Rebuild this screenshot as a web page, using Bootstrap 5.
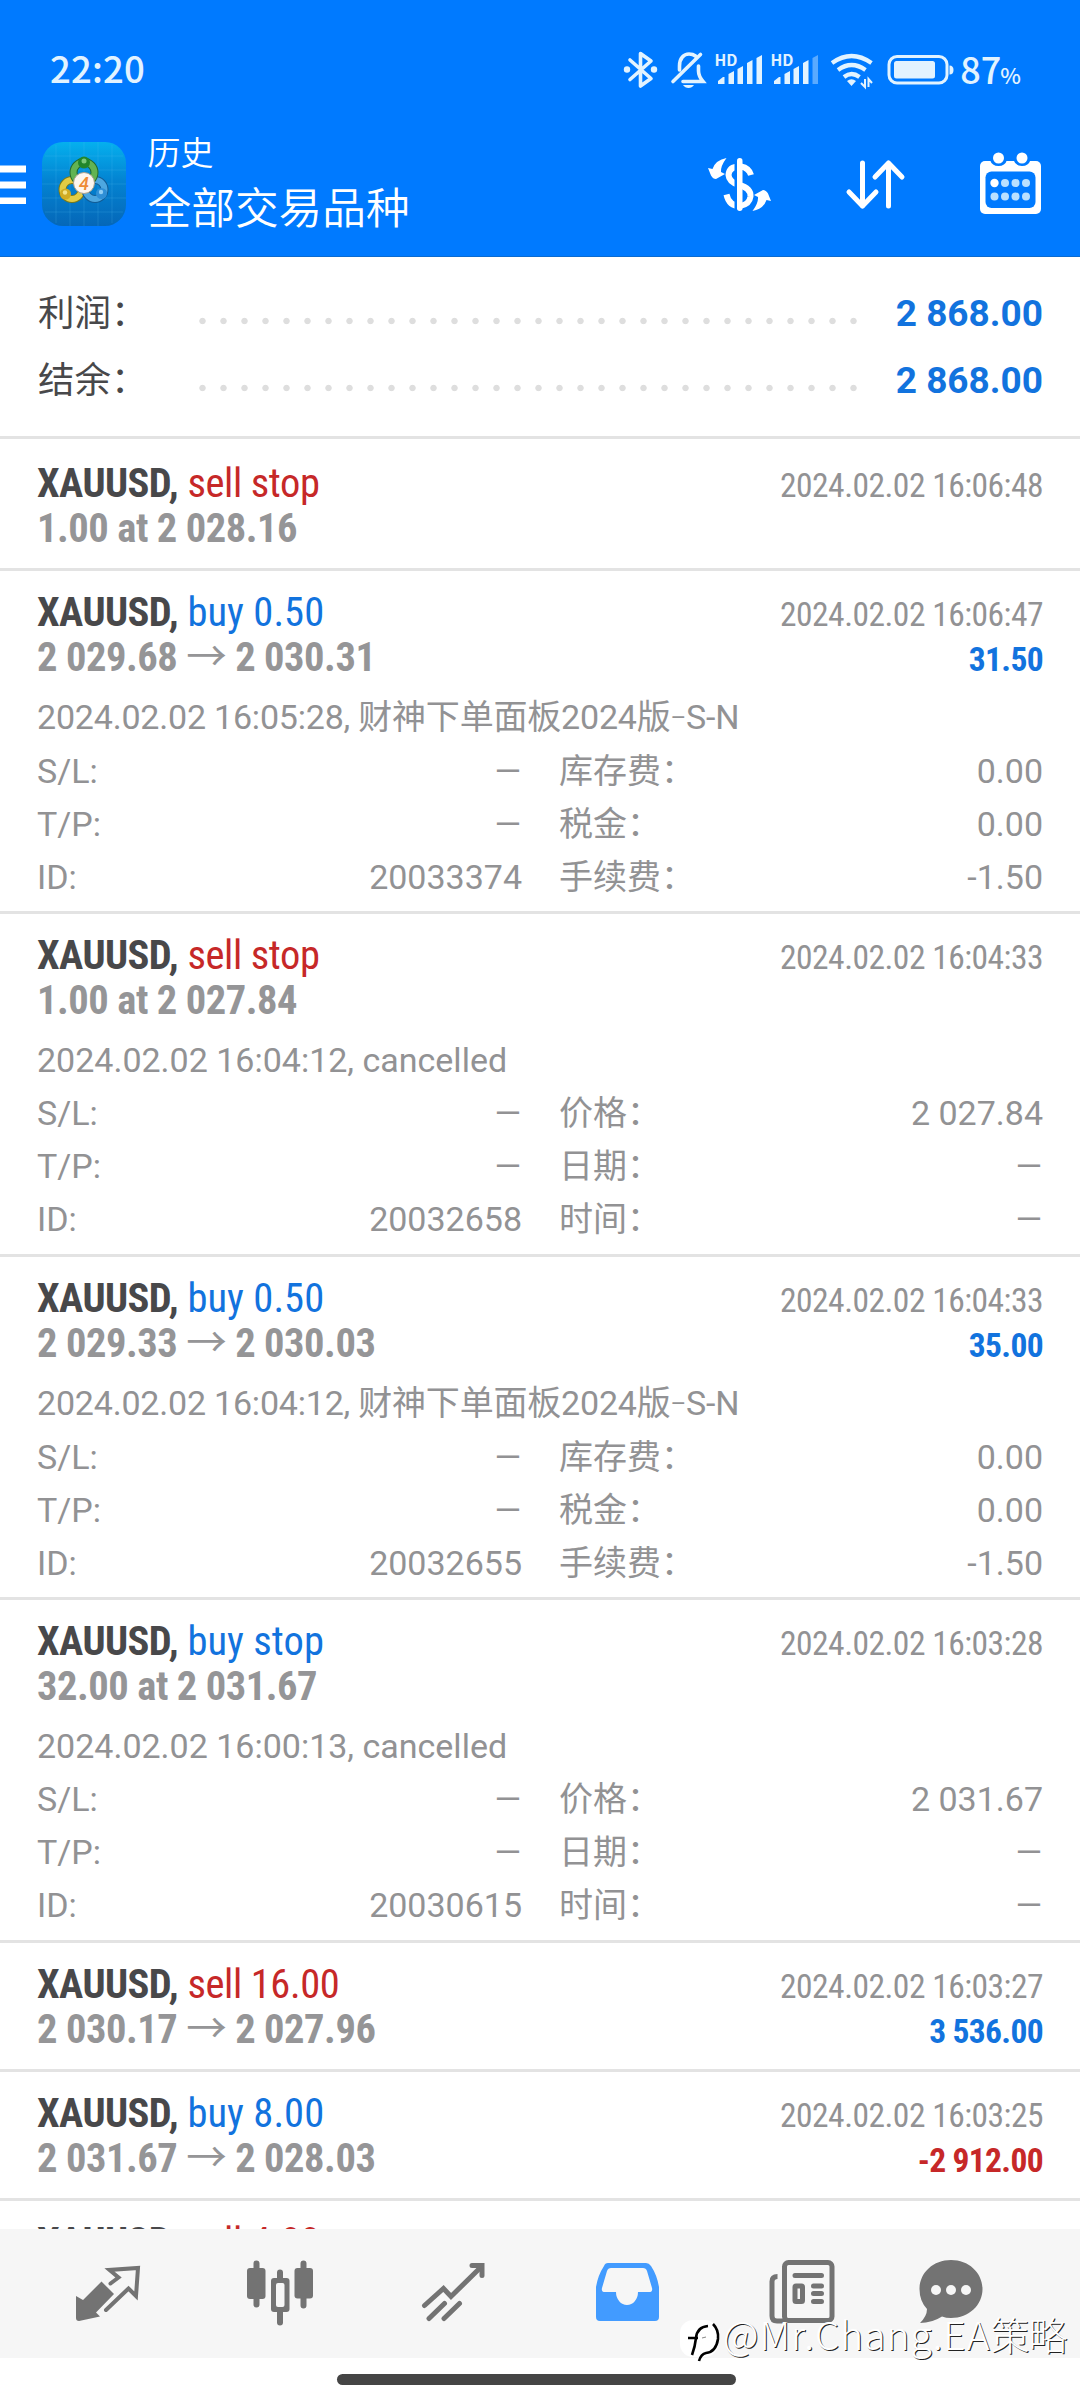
<!DOCTYPE html>
<html lang="zh-CN">
<head>
<meta charset="utf-8">
<meta name="viewport" content="width=device-width, initial-scale=1">
<title>历史</title>
<link href="https://cdn.jsdelivr.net/npm/bootstrap@5.3.0/dist/css/bootstrap.min.css" rel="stylesheet">
<style>
:root{--brand:#007aff;--ink:#48484a;--muted:#929294;--buy:#1273de;--sell:#c62828}
body{font-family:Roboto,"Noto Sans CJK SC",sans-serif;background:#fff;color:var(--ink);width:1080px}
svg{display:block;flex:none}
.app{height:2400px;overflow:hidden;position:relative}
.top{height:257px;background:var(--brand);border-bottom:1px solid #0b6bd0}
.status{height:40px;margin-top:50px;padding-left:50px;padding-right:60px;color:#e2f3ff;font-family:"Noto Sans CJK SC",sans-serif;font-weight:500;font-size:36px;line-height:40px}
.clock{font-size:36.5px;letter-spacing:.2px;margin-top:-4px}
.batt{margin-top:1px}
.pct{font-size:22px;margin-left:-1px;letter-spacing:-1px}
.tools{height:112px;margin-top:38px;padding-right:36px}
.heading{margin-left:21.5px;font-family:"Noto Sans CJK SC",sans-serif;font-weight:350}
.h-small{font-size:33px;line-height:47px}
.h-big{font-size:43.7px;line-height:60px}
.feed{height:1972px;overflow:hidden}
.sum{padding:23px 37px 22px 38px}
.sum-row{height:67px;line-height:67px;font-size:37px}
.sum-label{width:154px;font-size:36.5px}
.dots{width:672px;height:8px;margin-top:15px;background:radial-gradient(circle at center,#dedede 2.8px,transparent 3.6px) 0 0/21px 8px repeat-x}
.deal{border-top:3px solid #e3e3e3;padding:19px 37px 0 37px;height:129px;overflow:hidden}
.deal.first{padding-top:22px;height:132px}
.deal.open{height:343px}
.line{height:45px;line-height:45px;font-size:40.5px;font-family:"Roboto Condensed","Noto Sans CJK SC",sans-serif;white-space:nowrap}
.line b{font-weight:700;letter-spacing:-.55px}
.when{font-size:33.5px;color:var(--muted);line-height:50px;letter-spacing:-.5px}
.cash{font-size:33.5px;font-weight:700;line-height:50px;letter-spacing:-.65px}
.price{color:#959597;font-weight:700;letter-spacing:-.45px}
.buy{color:var(--buy)}.sell{color:var(--sell)}
.line .buy:not(.cash){letter-spacing:.05px}
.line .sell:not(.cash){letter-spacing:-.4px}
.info{margin-top:11px;font-size:34px;line-height:53px;color:var(--muted);font-weight:380}
.info .cell-a{width:485px}
.info .cell-b{width:484px;margin-left:37px}
.note-cn{letter-spacing:-.2px}
.short-dash{font-size:24px;vertical-align:3px}
.dash{margin-right:1px}
.tabs{height:129px;background:#f6f6f6;color:#737373;padding:28px 0 0 70px}
.tabs svg+svg{margin-left:var(--g)}
.pill{width:399px;height:11px;border-radius:6px;background:#454545;margin:16px auto 0 337px}
.mark-by{position:absolute;left:680px;top:2308px;height:56px;line-height:56px;font-family:"Noto Sans CJK SC",sans-serif;font-weight:300;font-size:39px;color:#fff;text-shadow:1px 1px 0 #222;white-space:nowrap}
.mark-by span{letter-spacing:.95px;margin:-7px 0 0 -2px}
.mark-by .han{letter-spacing:-1px;margin:0}
</style>
<script src="https://cdn.jsdelivr.net/npm/bootstrap@5.3.0/dist/js/bootstrap.bundle.min.js"></script>
</head>
<body>
<div class="app d-flex flex-column">
<header class="top d-flex flex-column flex-shrink-0">
  <div class="status d-flex align-items-center">
    <span class="clock">22:20</span>
    <div class="d-flex align-items-center ms-auto">
      <svg width="48" height="40" viewBox="620 50 48 40" fill="none" stroke="#e2f3ff" stroke-width="3.6" stroke-linejoin="round" stroke-linecap="round"><path d="M630 60 651 78.500 640.500 86V53.500L651 61 630 79.500"/><g fill="#e2f3ff" stroke="none"><circle cx="627" cy="69.500" r="3.200"/><circle cx="654" cy="69.500" r="3.200"/></g></svg>
      <svg width="44" height="40" viewBox="668 50 44 40" fill="none" stroke="#e2f3ff" stroke-width="3.6" stroke-linecap="round"><path d="M673 81.500 700.500 54.500M679.500 70V66C679.500 58 684 54 689 54q4 0 6.500 2M698.500 66v5q0 5 4.500 10.500H683"/><path d="M683 85h11q-2 3-5.500 3T683 85" fill="#e2f3ff" stroke="none"/></svg>
      <svg width="56" height="40" viewBox="712 50 56 40" fill="#e2f3ff"><text x="714.500" y="65.500" font-size="15.500" font-weight="700" textLength="23" lengthAdjust="spacingAndGlyphs">HD</text><path d="M718 84v-3l5-4h1.500v7zM728.500 84V74l5.500-3v13zM737.500 84V69l5.500-3v18zM747 84V63l5.500-3v24zM756.500 84V58l5.500-3v29z"/></svg>
      <svg width="60" height="40" viewBox="768 50 60 40" fill="#e2f3ff"><text x="770.500" y="65.500" font-size="15.500" font-weight="700" textLength="23" lengthAdjust="spacingAndGlyphs">HD</text><path d="M774 84v-3l5-4h1.500v7zM784.500 84V74l5.500-3v13zM793.500 84V69l5.500-3v18zM803 84V63l5.500-3v24z"/><path opacity=".4" d="M812.500 84V58l5.500-3v29z"/></svg>
      <svg width="56" height="40" viewBox="828 50 56 40" fill="none" stroke="#e2f3ff" stroke-width="4.200"><path d="M832 63q19.500-14 39.500 0M838 70q13.500-10 27.500 0M844 77q7.500-6 15.500 0"/><path d="M847 81q4.500-3.500 9 0l-4.500 5z" fill="#e2f3ff" stroke="none"/><path d="M865 79v8l-4-4M868.500 87v-8l3.500 4" stroke-width="2"/></svg>
      <svg width="76" height="40" viewBox="884 50 76 40"><rect x="889" y="56.500" width="58" height="26.500" rx="8" fill="none" stroke="#e2f3ff" stroke-width="3"/><rect x="894" y="61" width="41" height="17.500" rx="2.500" fill="#e2f3ff"/><path d="M949.500 65.500q4 0 4 4.500t-4 4.500z" fill="#e2f3ff"/></svg>
      <span class="batt d-flex align-items-baseline"><span>87</span><span class="pct">%</span></span>
    </div>
  </div>
  <div class="tools d-flex align-items-center text-white">
    <svg width="42" height="112" viewBox="0 128 42 112" fill="#fff"><path d="M0 165.500h26v7H0zM0 181.500h26v7H0zM0 197.500h26v6.500H0z"/></svg>
    <svg width="84" height="84" viewBox="0 0 84 84"><defs><linearGradient id="bg" x1="0" y1="0" x2="0" y2="1"><stop offset="0" stop-color="#05b0ee"/><stop offset=".45" stop-color="#0384d2"/><stop offset="1" stop-color="#0567b8"/></linearGradient></defs>
      <rect width="84" height="84" rx="21" fill="url(#bg)"/><path d="M14 3v78M28 0v84M42 0v84M56 0v84M70 3v78M3 14h78M0 28h84M0 42h84M0 56h84M3 70h78" stroke="#5cc4f2" stroke-opacity=".2" fill="none"/>
      <g fill="none" stroke-width="6"><circle cx="30" cy="47.500" r="9.500" stroke="#7b7a18" stroke-width="8"/><circle cx="30" cy="47.500" r="9.500" stroke="#e2cc45"/><circle cx="53" cy="47.500" r="9.500" stroke="#125b94" stroke-width="8"/><circle cx="53" cy="47.500" r="9.500" stroke="#4da7e0"/><circle cx="42" cy="30.500" r="10.500" stroke="#23692c" stroke-width="8"/><circle cx="42" cy="30.500" r="10.500" stroke="#62b352"/></g>
      <circle cx="42" cy="20.500" r="6" fill="#21862b"/><circle cx="23.500" cy="52" r="5.500" fill="#d1ac24"/><circle cx="59.500" cy="51.500" r="5.500" fill="#2f8fd6"/><circle cx="42" cy="19" r="2.500" fill="#7bc97a"/><circle cx="23" cy="50.500" r="2.200" fill="#f3e48a"/><circle cx="59" cy="50" r="2.200" fill="#8ecdf5"/>
      <circle cx="42" cy="41" r="10.500" fill="#fdf6ef" stroke="#a9a08c"/><text x="42" y="47.500" text-anchor="middle" font-size="18" font-style="italic" font-weight="500" fill="#ee8b35">4</text></svg>
    <div class="heading align-self-start"><div class="h-small">历史</div><div class="h-big">全部交易品种</div></div>
    <svg class="ms-auto" width="68" height="64" viewBox="706 151 68 64"><path d="M751 174q-2-7-10-8.500-12-.500-12.500 8.500.500 7 10.500 10 12 3 11.500 11.500-1 8-10.500 9.500-11 0-13.500-11.500" fill="none" stroke="#fff" stroke-width="6"/><path d="M736 155v56" stroke="#007aff" stroke-width="3"/><rect x="737" y="157" width="5.500" height="53" rx="2.700" fill="#fff"/><path d="M708 167l4.500 1q3-9 14-11-6 8-5.500 14l4 2-9 5q-3 0-5-3.500z" fill="#fff"/><path d="M708 167l4.500 1q3-9 14-11-6 8-5.500 14l4 2-9 5q-3 0-5-3.500z" fill="#fff" transform="rotate(180 739.500 183.500)"/></svg>
    <svg style="margin-left:71px" width="62" height="64" viewBox="845 151 62 64" fill="none" stroke="#fff" stroke-width="5" stroke-linecap="round" stroke-linejoin="round"><path d="M862.500 162v43M849 191l13.500 14 13.500-14M888.500 205v-43M875 176l13.500-14 13.500 14"/></svg>
    <svg style="margin-left:70px" width="67" height="64" viewBox="977 151 67 64"><rect x="980" y="160" width="61" height="53" rx="5" fill="#fff"/><rect x="985.500" y="170.500" width="50" height="36.500" rx="6" fill="#007aff"/><path d="M990 158v1q2 6 8.500 6t8.500-6v-1zM1013.500 158v1q2 6 8.500 6t8.500-6v-1z" fill="#007aff"/><g fill="#fff"><circle cx="998.500" cy="157" r="5.500"/><circle cx="1022" cy="157" r="5.500"/><circle cx="994.500" cy="182" r="4.200"/></g><g fill="#b9e0ff"><circle cx="1005" cy="182" r="4"/><circle cx="1015.500" cy="182" r="4"/><circle cx="1026" cy="182" r="4"/><circle cx="994.500" cy="195.500" r="4"/><circle cx="1005" cy="195.500" r="4"/><circle cx="1015.500" cy="195.500" r="4"/><circle cx="1026" cy="195.500" r="4"/></g></svg>
  </div>
</header>

<main class="feed flex-shrink-0">
  <section class="sum">
    <div class="sum-row d-flex align-items-center"><span class="sum-label">利润：</span><span class="dots"></span><b class="buy ms-auto">2 868.00</b></div>
    <div class="sum-row d-flex align-items-center"><span class="sum-label">结余：</span><span class="dots"></span><b class="buy ms-auto">2 868.00</b></div>
  </section>

  <article class="deal first">
    <div class="line d-flex justify-content-between"><span><b>XAUUSD,</b> <span class="sell">sell stop</span></span><span class="when">2024.02.02 16:06:48</span></div>
    <div class="line price">1.00 at 2 028.16</div>
  </article>

  <article class="deal open">
    <div class="line d-flex justify-content-between"><span><b>XAUUSD,</b> <span class="buy">buy 0.50</span></span><span class="when">2024.02.02 16:06:47</span></div>
    <div class="line d-flex justify-content-between"><span class="price">2 029.68 <span class="fw-normal">→</span> 2 030.31</span><span class="cash buy">31.50</span></div>
    <div class="info">
      <div class="note-cn">2024.02.02 16:05:28, 财神下单面板2024版<span class="short-dash">–</span>S-N</div>
      <div class="d-flex"><div class="cell-a d-flex justify-content-between"><span>S/L:</span><span class="dash">—</span></div><div class="cell-b d-flex justify-content-between"><span>库存费：</span><span>0.00</span></div></div>
      <div class="d-flex"><div class="cell-a d-flex justify-content-between"><span>T/P:</span><span class="dash">—</span></div><div class="cell-b d-flex justify-content-between"><span>税金：</span><span>0.00</span></div></div>
      <div class="d-flex"><div class="cell-a d-flex justify-content-between"><span>ID:</span><span>20033374</span></div><div class="cell-b d-flex justify-content-between"><span>手续费：</span><span>-1.50</span></div></div>
    </div>
  </article>

  <article class="deal open">
    <div class="line d-flex justify-content-between"><span><b>XAUUSD,</b> <span class="sell">sell stop</span></span><span class="when">2024.02.02 16:04:33</span></div>
    <div class="line price">1.00 at 2 027.84</div>
    <div class="info">
      <div>2024.02.02 16:04:12, cancelled</div>
      <div class="d-flex"><div class="cell-a d-flex justify-content-between"><span>S/L:</span><span class="dash">—</span></div><div class="cell-b d-flex justify-content-between"><span>价格：</span><span>2 027.84</span></div></div>
      <div class="d-flex"><div class="cell-a d-flex justify-content-between"><span>T/P:</span><span class="dash">—</span></div><div class="cell-b d-flex justify-content-between"><span>日期：</span><span class="dash">—</span></div></div>
      <div class="d-flex"><div class="cell-a d-flex justify-content-between"><span>ID:</span><span>20032658</span></div><div class="cell-b d-flex justify-content-between"><span>时间：</span><span class="dash">—</span></div></div>
    </div>
  </article>

  <article class="deal open">
    <div class="line d-flex justify-content-between"><span><b>XAUUSD,</b> <span class="buy">buy 0.50</span></span><span class="when">2024.02.02 16:04:33</span></div>
    <div class="line d-flex justify-content-between"><span class="price">2 029.33 <span class="fw-normal">→</span> 2 030.03</span><span class="cash buy">35.00</span></div>
    <div class="info">
      <div class="note-cn">2024.02.02 16:04:12, 财神下单面板2024版<span class="short-dash">–</span>S-N</div>
      <div class="d-flex"><div class="cell-a d-flex justify-content-between"><span>S/L:</span><span class="dash">—</span></div><div class="cell-b d-flex justify-content-between"><span>库存费：</span><span>0.00</span></div></div>
      <div class="d-flex"><div class="cell-a d-flex justify-content-between"><span>T/P:</span><span class="dash">—</span></div><div class="cell-b d-flex justify-content-between"><span>税金：</span><span>0.00</span></div></div>
      <div class="d-flex"><div class="cell-a d-flex justify-content-between"><span>ID:</span><span>20032655</span></div><div class="cell-b d-flex justify-content-between"><span>手续费：</span><span>-1.50</span></div></div>
    </div>
  </article>

  <article class="deal open">
    <div class="line d-flex justify-content-between"><span><b>XAUUSD,</b> <span class="buy">buy stop</span></span><span class="when">2024.02.02 16:03:28</span></div>
    <div class="line price">32.00 at 2 031.67</div>
    <div class="info">
      <div>2024.02.02 16:00:13, cancelled</div>
      <div class="d-flex"><div class="cell-a d-flex justify-content-between"><span>S/L:</span><span class="dash">—</span></div><div class="cell-b d-flex justify-content-between"><span>价格：</span><span>2 031.67</span></div></div>
      <div class="d-flex"><div class="cell-a d-flex justify-content-between"><span>T/P:</span><span class="dash">—</span></div><div class="cell-b d-flex justify-content-between"><span>日期：</span><span class="dash">—</span></div></div>
      <div class="d-flex"><div class="cell-a d-flex justify-content-between"><span>ID:</span><span>20030615</span></div><div class="cell-b d-flex justify-content-between"><span>时间：</span><span class="dash">—</span></div></div>
    </div>
  </article>

  <article class="deal">
    <div class="line d-flex justify-content-between"><span><b>XAUUSD,</b> <span class="sell">sell 16.00</span></span><span class="when">2024.02.02 16:03:27</span></div>
    <div class="line d-flex justify-content-between"><span class="price">2 030.17 <span class="fw-normal">→</span> 2 027.96</span><span class="cash buy">3 536.00</span></div>
  </article>
  <article class="deal">
    <div class="line d-flex justify-content-between"><span><b>XAUUSD,</b> <span class="buy">buy 8.00</span></span><span class="when">2024.02.02 16:03:25</span></div>
    <div class="line d-flex justify-content-between"><span class="price">2 031.67 <span class="fw-normal">→</span> 2 028.03</span><span class="cash sell">-2 912.00</span></div>
  </article>
  <article class="deal">
    <div class="line"><b>XAUUSD,</b> <span class="sell">sell 4.00</span></div>
  </article>
</main>

<nav class="tabs d-flex align-items-start flex-shrink-0">
  <svg width="76" height="72" viewBox="70 2257 76 72"><path d="M110.500 2283.500 118.500 2277.500 109.500 2270 138 2268 136 2296 128.500 2288.500 106 2310" fill="none" stroke="currentColor" stroke-width="4" stroke-linecap="round"/><path d="M76 2296 83 2300 101.500 2281.500 114 2294 96 2312.500 100 2316.500 79 2321q-3 0-3-3z" fill="currentColor"/></svg>
  <svg style="--g:96px" width="76" height="72" viewBox="242 2257 76 72" stroke="currentColor" fill="currentColor" stroke-linecap="round"><path d="M256.500 2263.500v41M280 2272.500v50M303.500 2263.500v42" stroke-width="6"/><g stroke="none"><rect x="247" y="2268" width="18.500" height="31" rx="3"/><rect x="271" y="2278" width="18.500" height="34" rx="3"/><rect x="294.500" y="2268" width="18.500" height="30.500" rx="3"/><rect x="276" y="2283" width="8.500" height="24" rx="2" fill="#f6f6f6"/></g></svg>
  <svg style="--g:100px" width="76" height="72" viewBox="418 2257 76 72" fill="none" stroke="currentColor" stroke-width="5" stroke-linecap="round"><path d="M424.500 2305.500 443.500 2288.500 451 2296.500 480 2268M429 2318.500 444.500 2303.500M444 2318.500 459.500 2303.500"/><path d="M472 2265.500h10v10" stroke-width="5"/></svg>
  <svg style="--g:96px" width="76" height="72" viewBox="590 2257 76 72"><path fill="#429bff" fill-rule="evenodd" d="M608 2263h38q3 0 5 3 6 9 8 21v30q0 4-4 4h-55q-4 0-4-4v-30q2-12 8-21 1-3 4-3zM611 2268q-3 0-4 3l-5 17q-1 4 3 4h11a11 13 0 0 0 22 0h11q4 0 3-4l-5-17q-1-3-4-3z"/></svg>
  <svg style="--g:98px" width="76" height="72" viewBox="764 2257 76 72" fill="none" stroke="currentColor" stroke-width="5" stroke-linecap="round"><rect x="784.500" y="2262.500" width="47.500" height="58" rx="4"/><path stroke-linecap="butt" d="M777.500 2276.500q-5.500 0-5.500 5v34.500q0 5 5 5h9"/><path d="M795 2275.500h26.500M813.500 2286h8M813.500 2293.500h8M813.500 2301.500h8"/><rect x="795" y="2286" width="7.500" height="15.500" rx="1" stroke-linejoin="round"/></svg>
  <svg style="--g:74px" width="76" height="72" viewBox="914 2257 76 72"><path fill="currentColor" d="M951 2260c18 0 31.500 13 31.500 29s-13.500 29-31.500 29q-5 0-9-1.500-10 6.500-22 6.500 7-7 7-14-7.500-8-7.500-20c0-16 13.500-29 31.500-29z"/><g fill="#f6f6f6"><circle cx="936" cy="2290" r="5"/><circle cx="951" cy="2290" r="5"/><circle cx="966" cy="2290" r="5"/></g></svg>
</nav>
<div class="pill flex-shrink-0"></div>

<div class="mark-by d-flex align-items-center">
  <svg width="45" height="56" viewBox="0 0 45 56"><rect x="0" y="12" width="38" height="37" rx="13" fill="#fff"/><g fill="none" stroke-width="2.600"><path d="M8 30h10M12 47q3-8 4-17 1-11 12-12" stroke="#000"/><path d="M33 16q6 6 5 15-2 13-12 14-5 1-7 8" stroke="#000"/><path d="M22 30l4-1" stroke="#888" stroke-width="1"/></g></svg>
  <span>@Mr.Chang.EA<span class="han">策略</span></span>
</div>
</div>
</body>
</html>
